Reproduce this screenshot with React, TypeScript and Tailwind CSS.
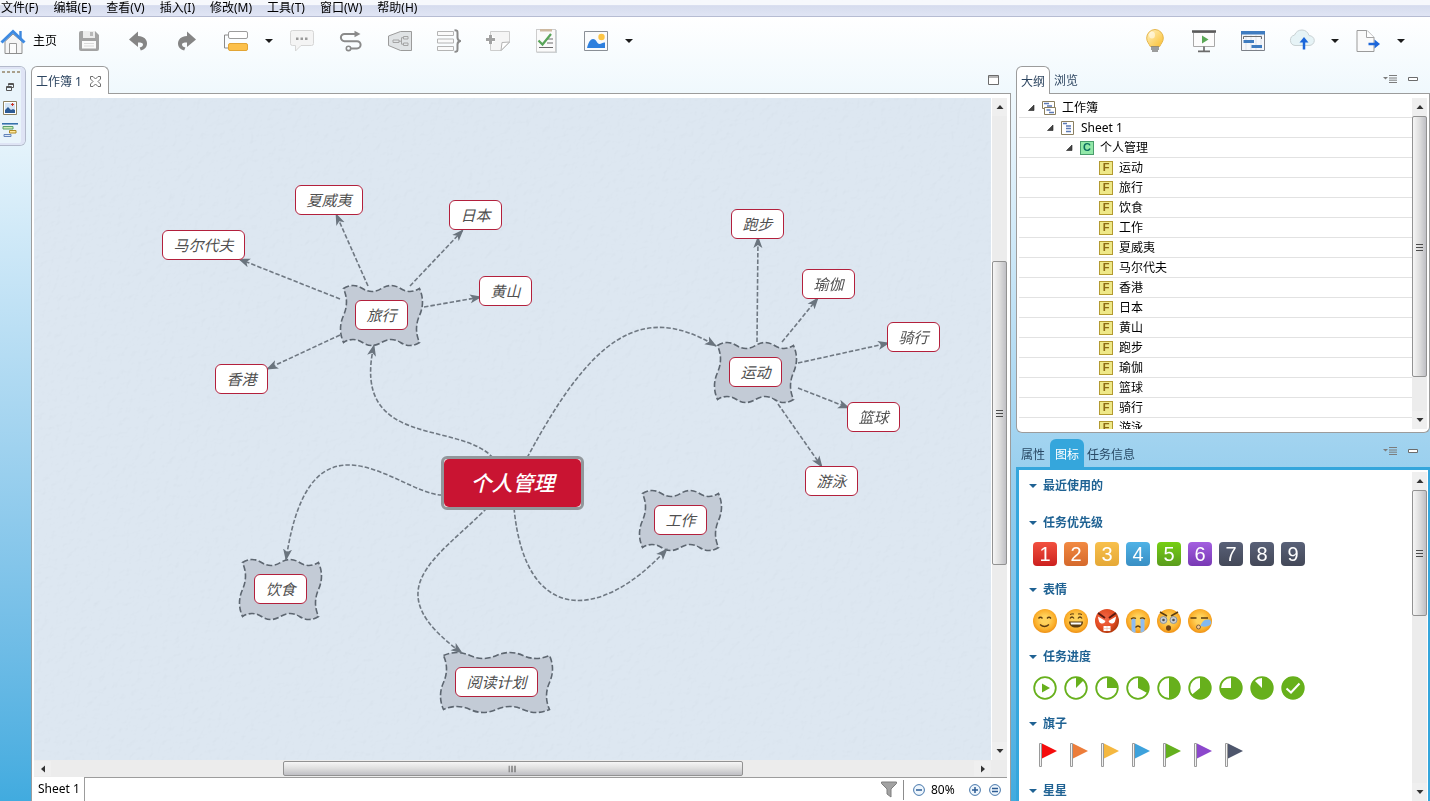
import { useState } from "react";
import type { ReactNode } from "react";
import clsx from "clsx";

const MENUS = [
  "文件(F)",
  "编辑(E)",
  "查看(V)",
  "插入(I)",
  "修改(M)",
  "工具(T)",
  "窗口(W)",
  "帮助(H)",
];

// map coordinates start at this corner of the sheet
const ORIGIN = { x: 34, y: 98 };

type Topic = { id: string; x: number; y: number; w: number; main?: boolean };

const TOPICS: Topic[] = [
  { id: "夏威夷", x: 295, y: 185, w: 68 },
  { id: "日本", x: 449, y: 200, w: 53 },
  { id: "马尔代夫", x: 162, y: 230, w: 83 },
  { id: "黄山", x: 479, y: 276, w: 53 },
  { id: "旅行", x: 355, y: 300, w: 53, main: true },
  { id: "香港", x: 215, y: 364, w: 53 },
  { id: "跑步", x: 731, y: 209, w: 53 },
  { id: "瑜伽", x: 802, y: 269, w: 53 },
  { id: "骑行", x: 887, y: 322, w: 53 },
  { id: "篮球", x: 847, y: 402, w: 53 },
  { id: "运动", x: 729, y: 357, w: 53, main: true },
  { id: "游泳", x: 805, y: 466, w: 53 },
  { id: "饮食", x: 254, y: 574, w: 53, main: true },
  { id: "阅读计划", x: 455, y: 667, w: 83, main: true },
  { id: "工作", x: 654, y: 505, w: 53, main: true },
];

const LINKS = [
  "M368 286L336 214",
  "M410 286L463 230",
  "M340 299L239 259",
  "M424 307L481 297",
  "M340 335L267 369",
  "M757 342L758 237",
  "M782 342L818 298",
  "M798 363L889 343",
  "M798 388L849 408",
  "M778 404L822 467",
  "M493 458C460 420 350 450 374 345",
  "M527 458C590 340 640 300 716 346",
  "M442 495C400 495 310 395 286 560",
  "M487 508C435 560 375 590 462 653",
  "M514 508C525 625 600 622 667 549",
];

const OUTLINE = [
  { label: "工作簿", kind: "book", depth: 0 },
  { label: "Sheet 1", kind: "sheet", depth: 1 },
  { label: "个人管理", kind: "C", depth: 2 },
  { label: "运动", kind: "F", depth: 3 },
  { label: "旅行", kind: "F", depth: 3 },
  { label: "饮食", kind: "F", depth: 3 },
  { label: "工作", kind: "F", depth: 3 },
  { label: "夏威夷", kind: "F", depth: 3 },
  { label: "马尔代夫", kind: "F", depth: 3 },
  { label: "香港", kind: "F", depth: 3 },
  { label: "日本", kind: "F", depth: 3 },
  { label: "黄山", kind: "F", depth: 3 },
  { label: "跑步", kind: "F", depth: 3 },
  { label: "瑜伽", kind: "F", depth: 3 },
  { label: "篮球", kind: "F", depth: 3 },
  { label: "骑行", kind: "F", depth: 3 },
  { label: "游泳", kind: "F", depth: 3 },
];

const PRIORITY = [
  "from-[#f2503f] to-[#cc1f1f]",
  "from-[#f28a42] to-[#d5692c]",
  "from-[#f8c04c] to-[#e5a836]",
  "from-[#4fb2e6] to-[#398fc4]",
  "from-[#76cf12] to-[#5a9c1c]",
  "from-[#a45fe0] to-[#7839b4]",
  "from-[#596178] to-[#434858]",
  "from-[#596178] to-[#434858]",
  "from-[#596178] to-[#434858]",
];

const PROGRESS = [0.125, 0.25, 0.33, 0.5, 0.64, 0.75, 0.875];

const FLAGS = [
  "#f50c0c",
  "#ed7d3a",
  "#f5b840",
  "#3ea2dc",
  "#64b01e",
  "#8c48cc",
  "#4e566c",
];

function Svg({
  children,
  className = "h-6 w-6",
  box = "0 0 24 24",
}: {
  children: ReactNode;
  className?: string;
  box?: string;
}) {
  return (
    <svg viewBox={box} fill="none" className={clsx("shrink-0", className)}>
      {children}
    </svg>
  );
}

function ToolButton({ label, children }: { label: string; children: ReactNode }) {
  return (
    <button
      aria-label={label}
      className="flex h-8 w-[49px] shrink-0 items-center justify-center"
    >
      {children}
    </button>
  );
}

function Caret({ label }: { label: string }) {
  return (
    <button
      aria-label={label}
      className="flex h-8 w-[17px] shrink-0 items-center justify-center"
    >
      <Svg box="0 0 8 4" className="h-1 w-2">
        <path d="M0 0h8L4 4z" fill="#1c1c1c" />
      </Svg>
    </button>
  );
}

const UNDO =
  "M3 10.5L12 2.5V7C18 7.2 21 10.4 21 14.6C21 18 18.6 20.6 14.8 21.6L13.6 18.6C15.8 18.2 17 17.2 17 15.6C17 14 15.4 13.6 12 13.6V18Z";

function Toolbar() {
  return (
    <div className="flex h-12 shrink-0 items-center pr-[21px]">
      <button className="flex h-8 w-16 shrink-0 items-center gap-[7px]">
        <Svg box="0 0 26 26" className="h-[26px] w-[26px]">
          <path d="M5 13.5L13 6l9 7.5V25.500H5z" fill="#f5f5f5" stroke="#8f8f8f" />
          <path d="M9.500 25V15.500h7V25" fill="#fbfbfb" stroke="#9a9a9a" />
          <path d="M20.500 3v7" stroke="#3d86dc" strokeWidth="2.400" />
          <path d="M1.500 14.500L13 3.500l11.500 11" stroke="#3d8ae2" strokeWidth="3" />
        </Svg>
        <span>主页</span>
      </button>
      <ToolButton label="保存">
        <Svg>
          <path d="M2 4q0-2 2-2h14l4 4v14q0 2-2 2H4q-2 0-2-2z" fill="#a3a3a3" />
          <path d="M6 2h12v7H6z" fill="#ececec" />
          <path d="M13 3h3v4h-3z" fill="#b8b8b8" />
          <path d="M5 12h14v7.500H5z" fill="#fafafa" />
          <path d="M7 14.500h10M7 17h10" stroke="#dadada" />
        </Svg>
      </ToolButton>
      <ToolButton label="撤销">
        <Svg>
          <path d={UNDO} fill="#858585" />
        </Svg>
      </ToolButton>
      <ToolButton label="重做">
        <Svg className="h-6 w-6 -scale-x-100">
          <path d={UNDO} fill="#858585" />
        </Svg>
      </ToolButton>
      <ToolButton label="主题">
        <Svg>
          <path d="M4 6H.5v13H4" stroke="#8a8a8a" />
          <rect x="4.500" y="2.500" width="19" height="7" rx="1.500" fill="#fff" stroke="#9c9c9c" />
          <rect x="4.500" y="14.500" width="19" height="7" rx="1.500" fill="#fcc04a" stroke="#e2a535" />
        </Svg>
      </ToolButton>
      <Caret label="更多主题" />
      <ToolButton label="批注">
        <Svg>
          <path
            d="M2.500 1.500h19q2 0 2 2v11q0 2-2 2H11L5.500 22v-5.500h-3q-2 0-2-2v-11q0-2 2-2z"
            fill="#f4f4f4"
            stroke="#d6d6d6"
          />
          <path d="M6 8.500h2.500v2.500H6zM10.500 8.500H13v2.500h-2.500zM15 8.500h2.500v2.500H15z" fill="#9a9a9a" />
        </Svg>
      </ToolButton>
      <ToolButton label="联系">
        <Svg>
          <path
            d="M17 5H5.500a3.600 3.600 0 0 0 0 7.200H18a3.600 3.600 0 0 1 0 7.200h-6"
            stroke="#8a8a8a"
            strokeWidth="2"
          />
          <path d="M15.500 1.800L21.500 5l-6 3.200z" fill="#8a8a8a" />
          <circle cx="9.500" cy="19.400" r="2.200" stroke="#8a8a8a" strokeWidth="1.600" />
        </Svg>
      </ToolButton>
      <ToolButton label="外框">
        <Svg>
          <path d="M.5 7l12-4.500h11v19h-11L.5 16.500z" fill="#e0e3e5" stroke="#9b9b9b" />
          <path d="M5 11h6v2.500H5zM15.500 7.500H20V10h-4.500zM15.500 14H20v2.500h-4.500z" stroke="#a4a4a4" />
          <path d="M11 12.200h2.500M15.500 8.700h-2v6.500h2" stroke="#a4a4a4" />
        </Svg>
      </ToolButton>
      <ToolButton label="概要">
        <Svg>
          <path d="M.5 2.500h16v4H.5zM.5 10h16v4H.5zM.5 17.500h16v4H.5z" fill="#fafafa" stroke="#b4b4b4" />
          <path
            d="M17.500 1.200c3 0 3 1 3 3v4.300c0 2 .8 3 2.700 3.500-1.900.5-2.700 1.500-2.700 3.500v4.300c0 2 0 3-3 3"
            stroke="#8a8a8a"
            strokeWidth="2"
          />
        </Svg>
      </ToolButton>
      <ToolButton label="备注">
        <Svg>
          <path d="M4.500 2.500h19v11l-8 8h-11z" fill="#f5f5f5" stroke="#cdcdcd" />
          <path d="M15 21.500l1-8 7.500-.5z" fill="#fff" stroke="#b4b4b4" />
          <path d="M4.500 6v9M0 10.500h9" stroke="#fff" strokeWidth="5" />
          <path d="M4.500 6v9M0 10.500h9" stroke="#a2a2a2" strokeWidth="3" />
        </Svg>
      </ToolButton>
      <ToolButton label="任务">
        <Svg>
          <rect x="2" y="1" width="20" height="23" fill="#ccd3d6" />
          <rect x="1.500" y=".5" width="19" height="22.500" fill="#fafafa" stroke="#cdcdcd" />
          <path d="M5 0h12v2.500H5z" fill="#cdb9a0" />
          <path d="M12 10h6M12 14h6M4 18.500h14" stroke="#6c6c6c" strokeWidth="1.200" />
          <path d="M3.500 11.500l4 4L16 5" stroke="#58a458" strokeWidth="2.200" />
        </Svg>
      </ToolButton>
      <ToolButton label="图片">
        <Svg>
          <path d="M.5 2.500h23v19H.5z" fill="#fafbfc" stroke="#8a8f96" />
          <circle cx="17.500" cy="8" r="3.200" fill="#fcc545" />
          <path
            d="M3 19c1-4.500 3-9 6-9 3.500 0 4 5 6.500 5 2 0 3-1.800 5.500-1.500V19z"
            fill="#2f80de"
          />
        </Svg>
      </ToolButton>
      <Caret label="更多图片" />

      <div className="ml-auto flex items-center">
        <ToolButton label="灵感">
          <Svg>
            <path
              d="M12 .5a8.500 8.500 0 0 0-8.300 8.600c0 3.600 2.300 5.400 3.600 8.400h9.400c1.300-3 3.600-4.800 3.600-8.400A8.500 8.500 0 0 0 12 .5z"
              fill="url(#bulb)"
              stroke="#e6b64a"
            />
            <ellipse cx="9" cy="6" rx="3" ry="3.500" fill="#fff" opacity=".55" />
            <path d="M8 18h8M8 20h8M9 22h6" stroke="#7d7d7d" strokeWidth="1.600" />
            <defs>
              <linearGradient id="bulb" x1="0" y1="0" x2="1" y2="1">
                <stop stopColor="#fff3c4" />
                <stop offset="1" stopColor="#fbbf30" />
              </linearGradient>
            </defs>
          </Svg>
        </ToolButton>
        <ToolButton label="演示">
          <Svg>
            <path d="M1.500 3.500h21v14h-21z" fill="#fcfcfc" stroke="#a8a8a8" />
            <path d="M.5 2.500h23" stroke="#5a5a5a" strokeWidth="2.500" strokeLinecap="round" />
            <path d="M10 6.500l6.500 4-6.500 4z" fill="#5aa857" />
            <path d="M12 17.500V22M6 22.300h12" stroke="#6b6b6b" strokeWidth="1.700" />
          </Svg>
        </ToolButton>
        <ToolButton label="甘特图">
          <Svg>
            <path d="M.5 2.500h23v19H.5z" fill="#f6f8fb" stroke="#7c8088" />
            <path d="M5 6v15M10 6v15M15 6v15M20 6v15" stroke="#dfe3ea" />
            <path d="M0 2h24v3.500H0z" fill="#3f7cc0" />
            <path d="M2.500 10V7.500h18V10" stroke="#6f6f6f" />
            <path d="M2.500 12.500H13M10.500 17.500H21" stroke="#3f7cc0" strokeWidth="2.800" />
          </Svg>
        </ToolButton>
        <ToolButton label="上传">
          <Svg box="0 0 26 24" className="h-6 w-[26px]">
            <path
              d="M6 16.500a5.300 5.300 0 0 1-.5-10.400C7 2.500 9.800 1 13 1s6 2 7 5.500c3 .3 5.300 2.200 5.300 5S23 16.500 20 16.500z"
              fill="#e6f3f6"
              stroke="#c9d2d4"
            />
            <path d="M15 20.500V11" stroke="#1c66da" strokeWidth="2.500" />
            <path d="M10.500 13.500L15 8l4.500 5.500z" fill="#1c66da" />
          </Svg>
        </ToolButton>
        <Caret label="更多上传" />
        <ToolButton label="导出">
          <Svg>
            <path d="M1 1.500h10l7 7v14H1z" fill="#fafafa" stroke="#9b9b9b" />
            <path d="M10.500 1.500v7H18" fill="#fff" stroke="#a4a4a4" />
            <path d="M12.500 15H20" stroke="#1c66da" strokeWidth="2.500" />
            <path d="M18.500 10.500L24 15l-5.500 4.500z" fill="#1c66da" />
          </Svg>
        </ToolButton>
        <Caret label="更多导出" />
      </div>
    </div>
  );
}

function SideRail() {
  return (
    <div className="h-20 w-[26px] shrink-0 rounded-r-md border border-l-0 border-[#b3bacb] bg-[#e9f4fb]">
      <div className="flex h-full flex-col items-start gap-2 rounded-r-[5px] border-y-2 border-r-4 border-[#dfe4f5] pt-0.5 pl-0.5">
        <Svg box="0 0 18 2" className="h-0.5 w-[18px]">
          <path d="M0 1h3M5 1h3M10 1h3M15 1h3" stroke="#a9a08c" strokeWidth="2" />
        </Svg>
        <button aria-label="还原" className="flex h-3 w-4 items-center justify-center">
          <Svg box="0 0 8 8" className="h-2 w-2">
            <path d="M2.500 2.500v-2h5v4h-2M.5 3.500h5v4h-5zM.5 4.500h5M2.500 1.500h5" stroke="#555" />
          </Svg>
        </button>
        <button aria-label="图片视图" className="flex h-3.5 w-4 items-center justify-center">
          <Svg box="0 0 14 14" className="h-3.5 w-3.5">
            <path d="M.5.5h13v13H.5z" fill="#fff" stroke="#8d8262" />
            <path d="M2 2h10v10H2z" fill="#d5e5f4" />
            <path d="M2 12V9l3-3 3 3 2-1 2 1v3z" fill="#2c5a94" />
            <path d="M8 3.500h3M9.500 2v3" stroke="#cf3426" />
          </Svg>
        </button>
        <button aria-label="甘特视图" className="flex h-3.5 w-4 items-center justify-center">
          <Svg box="0 0 16 14" className="h-3.5 w-4">
            <path d="M0 .8h16" stroke="#2c6aa8" strokeWidth="1.500" />
            <path d="M1 3.500h10V6H1z" fill="#cdebb5" stroke="#5ca06c" />
            <path d="M7.500 7.500H14V10H7.500z" fill="#ffe9a0" stroke="#b08a24" />
            <path d="M2 11.500h7v2H2z" fill="#dbe8f8" stroke="#6585bb" />
          </Svg>
        </button>
      </div>
    </div>
  );
}

function Scrollbar({
  horizontal,
  parts,
}: {
  horizontal?: boolean;
  parts: [number, number, number];
}) {
  const arrow = "flex shrink-0 items-center justify-center bg-[#efefef]";
  return (
    <div
      className={clsx(
        "flex shrink-0 bg-[#ececec]",
        horizontal ? "h-[15px] flex-row" : "w-[15px] flex-col"
      )}
    >
      <button
        aria-label={horizontal ? "向左" : "向上"}
        className={clsx(arrow, horizontal ? "h-full w-[17px]" : "h-[18px] w-full")}
      >
        <Svg box="0 0 8 8" className={clsx("h-2 w-2", horizontal && "-rotate-90")}>
          <path d="M.5 6L4 2l3.500 4z" fill="#333" />
        </Svg>
      </button>
      <div className="basis-0" style={{ flexGrow: parts[0] }} />
      <div
        className={clsx(
          "flex basis-0 items-center justify-center gap-px rounded-xs border border-[#929292] from-[#f6f6f6] via-[#dedede] to-[#bfbfc4]",
          horizontal ? "flex-row bg-linear-to-b" : "flex-col bg-linear-to-r"
        )}
        style={{ flexGrow: parts[1] }}
      >
        <Svg box="0 0 7 8" className={clsx("h-2 w-[7px]", horizontal && "rotate-90")}>
          <path d="M0 1.500h7M0 4.500h7M0 7.500h7" stroke="#4c4c4c" />
        </Svg>
      </div>
      <div className="basis-0" style={{ flexGrow: parts[2] }} />
      <button
        aria-label={horizontal ? "向右" : "向下"}
        className={clsx(arrow, horizontal ? "h-full w-[17px]" : "h-[18px] w-full")}
      >
        <Svg box="0 0 8 8" className={clsx("h-2 w-2", horizontal && "-rotate-90")}>
          <path d="M.5 2L4 6l3.500-4z" fill="#333" />
        </Svg>
      </button>
    </div>
  );
}

// wavy frame: two waves along the top and bottom, one down each side
function wavePath(t: Topic) {
  const left = t.x - 11.5;
  const top = t.y - 11.5;
  const q = (t.w + 23) / 4;
  const h = 27;
  return [
    `M${left} ${top}`,
    `q${q / 2} -6 ${q} 0`,
    `t${q} 0`,
    `t${q} 0`,
    `t${q} 0`,
    `q6 ${h / 2} 0 ${h}`,
    `t0 ${h}`,
    `q${-q / 2} 6 ${-q} 0`,
    `t${-q} 0`,
    `t${-q} 0`,
    `t${-q} 0`,
    `q-6 ${-h / 2} 0 ${-h}`,
    `t0 ${-h}z`,
  ].join("");
}

function MindMap() {
  return (
    <div className="relative min-w-0 flex-1 overflow-hidden bg-[#dde7f1]">
      <svg className="absolute inset-0 h-full w-full opacity-12 mix-blend-multiply">
        <filter id="paper" x="0" y="0" width="100%" height="100%">
          <feTurbulence type="fractalNoise" baseFrequency=".16" numOctaves="3" seed="4" />
          <feDiffuseLighting surfaceScale="1.2" diffuseConstant="1.120" lightingColor="#fff">
            <feDistantLight azimuth="230" elevation="62" />
          </feDiffuseLighting>
        </filter>
        <rect width="100%" height="100%" filter="url(#paper)" />
      </svg>
      <svg
        viewBox="34 98 957 662"
        width="957"
        height="662"
        fill="none"
        className="absolute top-0 left-0 max-w-none"
      >
        <defs>
          <marker
            id="arrow"
            viewBox="0 0 12 10"
            refX="11"
            refY="5"
            markerWidth="12"
            markerHeight="10"
            markerUnits="userSpaceOnUse"
            orient="auto"
          >
            <path d="M0 0.500L12 5L0 9.500L3 5z" fill="#6a747e" />
          </marker>
        </defs>
        {TOPICS.filter((t) => t.main).map((t) => (
          <path
            key={t.id}
            d={wavePath(t)}
            fill="#c3cbd6"
            stroke="#5d6670"
            strokeWidth="1.6"
            strokeDasharray="6 2.500"
          />
        ))}
        {LINKS.map((d) => (
          <path
            key={d}
            d={d}
            stroke="#6f7882"
            strokeWidth="1.600"
            strokeDasharray="4.500 2"
            markerEnd="url(#arrow)"
          />
        ))}
      </svg>
      {TOPICS.map((t) => (
        <button
          key={t.id}
          className="absolute flex h-[30px] items-center justify-center rounded-md border border-[#b3203c] bg-white text-[15px] text-[#505050] italic"
          style={{ left: t.x - ORIGIN.x, top: t.y - ORIGIN.y, width: t.w }}
        >
          {t.id}
        </button>
      ))}
      <button
        className="absolute flex h-[54px] w-[143px] rounded-md border-3 border-[#92979b] bg-[#f4e6ea]"
        style={{ left: 441 - ORIGIN.x, top: 456 - ORIGIN.y }}
      >
        <span className="flex flex-1 items-center justify-center self-stretch rounded-[5px] bg-[#c91432] text-[21px] font-medium text-white italic">
          个人管理
        </span>
      </button>
    </div>
  );
}

function ZoomIcon({ d }: { d: string }) {
  return (
    <Svg box="0 0 12 12" className="h-3 w-3">
      <circle cx="6" cy="6" r="5.400" fill="#eef6fd" stroke="#4676aa" />
      <path d={d} stroke="#2d5c94" strokeWidth="1.500" />
    </Svg>
  );
}

function Editor() {
  return (
    <div className="flex min-w-0 flex-1 flex-col">
      <div className="flex h-7 shrink-0">
        <div className="flex w-[78px] items-center gap-2 rounded-t-md border border-b-0 border-[#9c9c9c] bg-white pt-0.5 pl-1 text-[#2d4560]">
          <button className="whitespace-nowrap">工作簿 1</button>
          <button aria-label="关闭">
            <Svg box="0 0 11 11" className="h-[11px] w-[11px]">
              <path
                d="M.5.5h2.500L5.500 3 8 .5h2.500V3L8 5.500 10.500 8v2.500H8L5.500 8 3 10.500H.5V8L3 5.500.5 3z"
                fill="#fff"
                stroke="#6e6e6e"
              />
            </Svg>
          </button>
        </div>
        <div className="flex flex-1 items-center justify-end border-b border-[#9c9c9c] pr-3">
          <button aria-label="最大化">
            <Svg box="0 0 11 10" className="h-2.5 w-[11px]">
              <path d="M.5.5h10v9H.5zM.5 2h10" fill="#fff" stroke="#6c6c6c" />
            </Svg>
          </button>
        </div>
      </div>
      <div className="flex min-h-0 flex-1 flex-col border-x border-[#9c9c9c] bg-white pt-1 pr-[3px] pl-0.5">
        <div className="flex min-h-0 flex-1 gap-px">
          <MindMap />
          <Scrollbar parts={[145, 303, 178]} />
        </div>
        <div className="flex h-[17px] shrink-0 bg-[#ececec] pr-4">
          <div className="flex flex-1 flex-col pt-px">
            <Scrollbar horizontal parts={[232, 459, 232]} />
          </div>
        </div>
        <div className="flex h-6 shrink-0">
          <button className="w-[51px] border-r border-[#9c9c9c] pl-1 text-left whitespace-nowrap">
            Sheet 1
          </button>
          <div className="flex flex-1 items-center justify-end border-t border-[#9c9c9c] pr-1.5">
            <button aria-label="筛选">
              <Svg box="0 0 16 17" className="h-[17px] w-4">
                <path d="M.5 1h15v1.500L10 8v8l-4-3V8L.5 2.500z" fill="#a2a2a2" stroke="#7e7e7e" />
              </Svg>
            </button>
            <div className="ml-1.5 h-5 w-px bg-[#8c8c8c]" />
            <button aria-label="缩小" className="ml-[9px]">
              <ZoomIcon d="M3 6h6" />
            </button>
            <span className="ml-1.5 w-[38px]">80%</span>
            <button aria-label="放大">
              <ZoomIcon d="M3 6h6M6 3v6" />
            </button>
            <button aria-label="实际大小" className="ml-2">
              <ZoomIcon d="M3 4.500h6M3 7.500h6" />
            </button>
          </div>
        </div>
      </div>
    </div>
  );
}

function ViewActions() {
  return (
    <div className="ml-auto flex items-center gap-[11px] pr-3 pb-1">
      <button aria-label="视图菜单">
        <Svg box="0 0 14 8" className="h-2 w-3.5">
          <path d="M0 2h5L2.500 4.500z" fill="#7c7c7c" />
          <path d="M6 .5h8M6 3h8M6 5.200h8M6 7.500h8" stroke="#7c7c7c" />
        </Svg>
      </button>
      <button aria-label="最小化">
        <Svg box="0 0 10 4" className="h-1 w-2.5">
          <path d="M.5.5h9v3h-9z" fill="#fff" stroke="#6c6c6c" />
        </Svg>
      </button>
    </div>
  );
}

function KindIcon({ kind }: { kind: string }) {
  if (kind === "book") {
    return (
      <Svg box="0 0 14 14" className="h-3.5 w-3.5">
        <path d="M.5.5h12v7H.5z" fill="#fff" stroke="#8a7f60" />
        <path d="M2.500 6.500h11v7h-11z" fill="#fff" stroke="#8a7f60" />
        <path d="M2 2.500h5M5 5h5M4.500 9h4M7 11.500h5" stroke="#5c7ab5" strokeWidth="1.500" />
      </Svg>
    );
  }
  if (kind === "sheet") {
    return (
      <Svg box="0 0 14 14" className="h-3.5 w-3.5">
        <path d="M.5.5h12v13H.5z" fill="#fff" stroke="#8a7f60" />
        <path d="M2 2.500h4M5 5h5M5 7.500h5M5 10.500h5" stroke="#5c7ab5" strokeWidth="1.300" />
      </Svg>
    );
  }
  return (
    <span
      className={clsx(
        "flex h-3.5 w-3.5 items-center justify-center border font-['Liberation_Sans',sans-serif] text-[11px] leading-none font-bold",
        kind === "C"
          ? "border-[#4a9c6c] bg-[#92e8a8] text-[#0c6e60]"
          : "border-[#b39a30] bg-[#eee888] text-[#8d6a14]"
      )}
    >
      {kind}
    </span>
  );
}

function OutlinePanel() {
  const [tab, setTab] = useState("大纲");
  return (
    <div className="flex h-[367px] shrink-0 flex-col">
      <div className="flex h-7 shrink-0">
        <button
          className="w-[34px] rounded-t-md border border-b-0 border-[#9c9c9c] bg-white pt-0.5 text-[#2d4560]"
          onClick={() => setTab("大纲")}
          aria-pressed={tab === "大纲"}
        >
          大纲
        </button>
        <div className="flex flex-1 items-center border-b border-[#9c9c9c] pt-[3px] pl-1">
          <button className="text-[#2d4560]" onClick={() => setTab("浏览")}>
            浏览
          </button>
          <ViewActions />
        </div>
      </div>
      <div className="flex min-h-0 flex-1 rounded-b-md border border-t-0 border-[#9c9c9c] bg-white px-0.5 pt-1 pb-[3px]">
        <ul className="min-w-0 flex-1 overflow-hidden">
          {OUTLINE.map((row) => (
            <li
              key={row.label}
              className="flex h-5 items-center border-b border-[#e2e2e2]"
              style={{ paddingLeft: 9 + row.depth * 19 }}
            >
              <span className="mr-1.5 flex w-2">
                {row.depth < 3 && (
                  <Svg box="0 0 7 7" className="h-[7px] w-[7px]">
                    <path d="M6 1v5.500H.5z" fill="#444" stroke="#222" strokeWidth=".6" />
                  </Svg>
                )}
              </span>
              <button className="flex items-center gap-1.5">
                <KindIcon kind={row.kind} />
                {row.label}
              </button>
            </li>
          ))}
        </ul>
        <Scrollbar parts={[0, 261, 34]} />
      </div>
    </div>
  );
}

function Section({ title, children }: { title: string; children?: ReactNode }) {
  return (
    <section>
      <button className="flex h-5 items-center gap-1.5 font-bold text-[#1f6293]">
        <Svg box="0 0 8 4" className="h-1 w-2">
          <path d="M0 0h8L4 4z" fill="#1f6293" />
        </Svg>
        {title}
      </button>
      {children ? (
        <div className="flex gap-[7px] pt-[9px] pb-3.5 pl-1">{children}</div>
      ) : (
        <div className="h-[17px]" />
      )}
    </section>
  );
}

function Face({ angry, children }: { angry?: boolean; children: ReactNode }) {
  return (
    <button aria-label="表情">
      <Svg>
        <circle cx="12" cy="12" r="12" fill={angry ? "url(#rage)" : "url(#skin)"} />
        {children}
      </Svg>
    </button>
  );
}

function Faces() {
  const line = "#5b3c10";
  return (
    <>
      <svg className="absolute h-0 w-0">
        <defs>
          <radialGradient id="skin" cy=".45" r=".55">
            <stop offset=".3" stopColor="#ffd25c" />
            <stop offset=".75" stopColor="#fbb02c" />
            <stop offset="1" stopColor="#ee9116" />
          </radialGradient>
          <radialGradient id="rage" cx=".4" cy=".4" r=".6">
            <stop stopColor="#f4684a" />
            <stop offset=".7" stopColor="#e24c22" />
            <stop offset="1" stopColor="#b83c10" />
          </radialGradient>
        </defs>
      </svg>
      <Face>
        <path d="M5.500 9.500q2-2.500 4 0M14 9.500q2-2.500 4 0M7 15.500q4.500 4 9 0" stroke={line} strokeWidth="1.300" />
      </Face>
      <Face>
        <path d="M6 9.500q2-3 4 0M14 9.500q2-3 4 0" stroke={line} strokeWidth="1.300" />
        <path d="M6 5.500q2-1 4-.5M14 5q2-.5 4 .5" stroke={line} />
        <path d="M5 12.500h14c0 4-3 6-7 6s-7-2-7-6z" fill={line} />
        <path d="M6.500 13.500h11l-.5 2H7z" fill="#fff" />
      </Face>
      <Face angry>
        <path d="M3 4l7 5M21 4l-7 5" stroke="#5a1a10" strokeWidth="2" />
        <path d="M3 7.500l7.500 4.500q-1 3-4 2.500T3 7.500zM21 7.500L13.500 12q1 3 4 2.500t3.500-7z" fill="#fff" />
        <path d="M8.500 17h7v5h-7z" fill="#fff" />
        <path d="M8.500 19.500h7M12 17v5" stroke="#eab7a8" strokeWidth=".6" />
      </Face>
      <Face>
        <path d="M5.500 10v12q2 1.500 4 1.700V10zM14.500 10v13.700q2-.4 4-1.700V10z" fill="#8dbcf0" />
        <path d="M5 10q2.500-2 5-.5M14 9.500q2.500-1.500 5 .5M9.500 18.500q2.500-3 5 0" stroke={line} strokeWidth="1.300" />
      </Face>
      <Face>
        <path d="M3 3l7 4M21 3l-7 4" stroke={line} strokeWidth="1.500" />
        <circle cx="6.500" cy="11" r="3.500" fill="#c8ccd0" stroke="#90959a" />
        <circle cx="16.500" cy="11" r="3.500" fill="#c8ccd0" stroke="#90959a" />
        <circle cx="6.500" cy="11" r="1.300" fill="#4c4c4c" />
        <circle cx="16.500" cy="11" r="1.300" fill="#4c4c4c" />
        <ellipse cx="11.500" cy="19" rx="2.500" ry="2.800" fill="#6e4216" />
      </Face>
      <Face>
        <path d="M2.500 9h6M13 9h7" stroke={line} strokeWidth="1.600" />
        <circle cx="10.500" cy="18" r="2" fill="#f7c88c" stroke="#7a6040" />
        <path d="M12.500 17c1-3 3-7 8-6.500 3 .5 3.500 4 1.500 5.500-3 2-6 2-9.500 1z" fill="#84b9ef" />
      </Face>
    </>
  );
}

function Pie({ part }: { part: number }) {
  const angle = part * Math.PI * 2;
  const x = 12 + 11 * Math.sin(angle);
  const y = 12 - 11 * Math.cos(angle);
  return (
    <path
      d={`M12 12V1A11 11 0 ${part > 0.5 ? 1 : 0} 1 ${x} ${y}z`}
      fill="#67b01c"
    />
  );
}

function Progress({ children }: { children: ReactNode }) {
  return (
    <button aria-label="任务进度">
      <Svg>
        <circle cx="12" cy="12" r="10.800" fill="#fff" stroke="#67b01c" strokeWidth="1.800" />
        {children}
      </Svg>
    </button>
  );
}

function MarkerPanel() {
  return (
    <div className="flex min-h-0 flex-1 flex-col">
      <div className="flex h-7 shrink-0 items-stretch text-[#2a4a66]">
        <button className="w-[34px] pt-[3px]">属性</button>
        <button className="w-[34px] rounded-t-md bg-[#35a6dc] pt-[3px] text-white">图标</button>
        <button className="px-[3px] pt-[3px]">任务信息</button>
        <ViewActions />
      </div>
      <div className="flex min-h-0 flex-1 border-3 border-r-2 border-b-0 border-[#35a6dc] bg-white">
        <div className="min-w-0 flex-1 overflow-hidden pt-1.5 pl-2.5">
          <Section title="最近使用的" />
          <Section title="任务优先级">
            {PRIORITY.map((color, i) => (
              <button
                key={i}
                className={clsx(
                  "h-6 w-6 rounded-[4px] bg-linear-to-b font-['Liberation_Sans',sans-serif] text-xl leading-6 text-white",
                  color
                )}
              >
                {i + 1}
              </button>
            ))}
          </Section>
          <Section title="表情">
            <Faces />
          </Section>
          <Section title="任务进度">
            <Progress>
              <path d="M9 7.500l8 4.500-8 4.500z" fill="#67b01c" />
            </Progress>
            {PROGRESS.map((p) => (
              <Progress key={p}>
                <Pie part={p} />
              </Progress>
            ))}
            <Progress>
              <circle cx="12" cy="12" r="11" fill="#67b01c" />
              <path d="M5.500 12.500l4.500 4 8.500-9" stroke="#fff" strokeWidth="2" />
            </Progress>
          </Section>
          <Section title="旗子">
            {FLAGS.map((color) => (
              <button key={color} aria-label="旗子">
                <Svg>
                  <path d="M6.500.5h2v23h-2z" fill="#f2f2f2" stroke="#9a9a9a" />
                  <path d="M9 .5L24 8 9 15.500z" fill={color} />
                </Svg>
              </button>
            ))}
          </Section>
          <Section title="星星" />
        </div>
        <div className="flex pt-0.5 pr-px">
          <Scrollbar parts={[0, 125, 169]} />
        </div>
      </div>
    </div>
  );
}

export default function App() {
  return (
    <div className="flex h-screen flex-col overflow-hidden bg-linear-to-b from-white from-2% via-[#eff8fd] via-12% to-[#41abdf] font-['Noto_Sans','Noto_Sans_CJK_SC',sans-serif] text-xs text-black">
      <nav className="flex h-[17px] shrink-0 items-center gap-[15px] border-b border-[#b6bcd2] bg-linear-to-b from-[#f6f8fc] from-30% via-[#d6dcee] via-35% to-[#e0e5f4] pl-px">
        {MENUS.map((m) => (
          <button key={m} className="leading-4 whitespace-nowrap">
            {m}
          </button>
        ))}
      </nav>
      <Toolbar />
      <main className="flex min-h-0 flex-1 gap-[5px] pt-px">
        <SideRail />
        <Editor />
        <div className="flex w-[414px] shrink-0 flex-col gap-1.5">
          <OutlinePanel />
          <MarkerPanel />
        </div>
      </main>
    </div>
  );
}
